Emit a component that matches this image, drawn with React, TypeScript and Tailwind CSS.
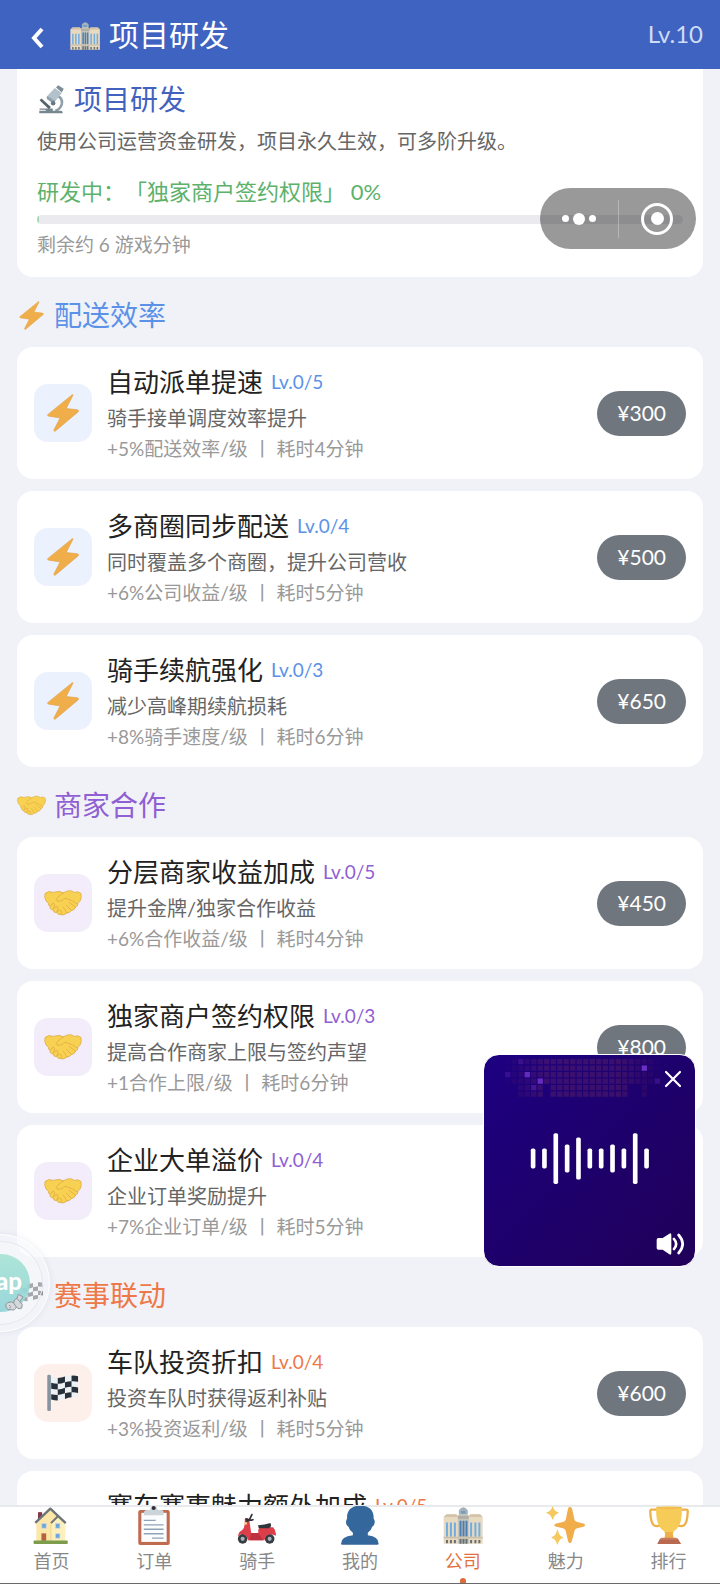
import type { ReactNode } from "react";

type IconProps = { className?: string };

const BoltIcon = ({ className }: IconProps) => (
  <svg viewBox="140 315 98 116" className={className} aria-hidden="true">
    <path
      d="M217 317 L142 378 Q141 382 146 383 L180 388 L161 425 Q161 430 166 428 L236 369 Q238 364 233 363 L199 359 L219 320 Q220 316 217 317Z"
      fill="#f0ae4a"
      stroke="#dd9a3c"
      strokeWidth="1.5"
    />
  </svg>
);

const HandshakeIcon = ({ className }: IconProps) => (
  <svg viewBox="134 366 111 78" className={className} aria-hidden="true">
    <path
      d="M137 377 Q148 368 160 374 L178 371 Q186 374 191 375 Q202 368 212 369 L224 374 Q234 369 242 377 Q245 390 239 400 L233 406 Q234 414 226 417 Q224 426 214 427 Q210 435 201 434 Q192 443 183 439 Q174 440 171 433 Q161 434 160 425 Q150 424 152 415 Q146 413 147 406 L140 399 Q134 389 137 377Z"
      fill="#f8d152"
      stroke="#d8a33a"
      strokeWidth="2"
    />
    <path
      d="M191 375 Q178 382 170 394 Q170 402 180 400 Q190 397 197 391 Q214 396 232 408 M207 403 L226 417 M199 411 L214 427 M190 417 L201 434 M152 414 Q157 405 163 406 Q168 409 160 424 M162 422 Q169 412 174 416 Q177 420 171 432 M173 431 Q179 422 184 427 Q186 431 183 438"
      fill="none"
      stroke="#dba640"
      strokeWidth="2"
      strokeLinecap="round"
    />
  </svg>
);

const FlagIcon = ({ className }: IconProps) => (
  <svg viewBox="140 525 100 116" className={className} aria-hidden="true">
    <rect x="142" y="527" width="11" height="111" rx="4" fill="#8595a0" />
    <path d="M154 532 Q176 542 196 533 Q216 525 236 532 L236 599 Q214 592 196 601 Q176 609 154 603Z" fill="#eef1f3" />
    <path
      d="M174 537 Q186 537 196 533 V550 Q186 555 174 555Z M216 530 Q226 529 236 532 V549 Q226 546 216 547Z M154 552 Q164 555 174 555 V572 Q164 572 154 570Z M196 550 Q206 547 216 547 V564 Q206 564 196 567Z M174 572 Q186 572 196 567 V584 Q186 588 174 589Z M216 564 Q226 563 236 566 V583 Q226 580 216 581Z M154 587 Q164 589 174 589 V606 Q164 606 154 603Z M196 584 Q206 581 216 581 V596 Q206 597 196 601Z"
      fill="#26303a"
    />
  </svg>
);

const MicroscopeIcon = ({ className }: IconProps) => (
  <svg viewBox="113 253 82 90" className={className} aria-hidden="true">
    <path d="M168 286 Q190 290 186 312 Q182 328 166 333" fill="none" stroke="#8f9fa9" strokeWidth="8" />
    <path d="M117 326 H158 V333 H184 Q189 334 189 341 H116 V333 H136 V330 H117Z" fill="#78878f" />
    <path d="M117 300 L123 295 L152 321 L146 328Z" fill="#56636b" />
    <path d="M164 262 L186 278 L166 303 Q160 310 152 305 L142 298 Q136 293 141 287Z" fill="#b3c2ca" />
    <path d="M141 287 L166 303 Q160 310 152 305 L142 298 Q136 293 141 287Z" fill="#90a2ad" />
    <path d="M168 261 L175 254 L192 265 L186 276Z" fill="#7d8e98" />
    <circle cx="159" cy="310" r="7" fill="#687982" />
  </svg>
);

const BuildingIcon = ({ className }: IconProps) => (
  <svg viewBox="247 141 121 112" className={className} aria-hidden="true">
    <path d="M249 171 L258 163 H287 L294 171 V252 H249Z M323 171 L330 163 H359 L367 171 V252 H323Z" fill="#e8d9c1" />
    <path d="M249 171 L258 163 H287 L294 171Z M323 171 L330 163 H359 L367 171Z" fill="#d3c3aa" />
    <path d="M292 168 L297 160 H320 L325 168 V252 H292Z" fill="#c3c4bf" />
    <path d="M295 162 V151 Q308 133 322 151 V162Z" fill="#a5b3b8" />
    <path d="M302 153 H315 V161 H302Z" fill="#6f9dc4" />
    <path d="M292 168 H325 V177 H292Z" fill="#b3aea3" />
    <path
      d="M256 188 h6 v43 h-6z M268 188 h6 v43 h-6z M280 188 h6 v43 h-6z M329 188 h6 v43 h-6z M342 188 h6 v43 h-6z M354 188 h6 v43 h-6z"
      fill="#70aee0"
    />
    <path d="M297 183 h6 v47 h-6z M306 183 h6 v47 h-6z M315 183 h6 v47 h-6z" fill="#4d7fae" />
    <path
      d="M256 241 h6 v10 h-6z M268 241 h6 v10 h-6z M280 241 h6 v10 h-6z M297 238 h6 v14 h-6z M306 238 h6 v14 h-6z M315 238 h6 v14 h-6z M329 241 h6 v10 h-6z M342 241 h6 v10 h-6z M354 241 h6 v10 h-6z"
      fill="#68706f"
    />
    <path d="M249 231 H367 V236 H249Z" fill="#cfc0a8" />
  </svg>
);

const HouseIcon = ({ className }: IconProps) => (
  <svg viewBox="97 138 116 114" className={className} aria-hidden="true">
    <path d="M117 156 h12 v22 h-12z" fill="#84384a" />
    <path d="M112 185 L153 147 L196 185 V241 H112Z" fill="#fbe8a9" />
    <path d="M155 190 L177 168 L197 190 V241 H155Z" fill="#fdf0bd" />
    <path d="M109 187 L153 146 L198 188" fill="none" stroke="#6f7478" strokeWidth="7" strokeLinejoin="round" />
    <path d="M155 188 L176 167" fill="none" stroke="#6f7478" strokeWidth="6" />
    <path d="M155 190 V240" stroke="#e5c98a" strokeWidth="2" />
    <path d="M128 189 h13 v14 h-13z M168 189 h13 v14 h-13z M168 219 h13 v13 h-13z" fill="#6ba5dc" stroke="#c9dbe6" strokeWidth="2" />
    <path d="M127 218 h14 v22 h-14z" fill="#b5623f" />
    <rect x="104" y="239" width="100" height="10" rx="3" fill="#7d9c4c" />
  </svg>
);

const ClipboardIcon = ({ className }: IconProps) => (
  <svg viewBox="404 138 116 114" className={className} aria-hidden="true">
    <rect x="416" y="150" width="92" height="102" rx="6" fill="#c06a50" />
    <path d="M425 158 H499 V243 H425Z" fill="#fbfcfd" />
    <path d="M433 165 V155 Q434 150 442 150 H450 Q452 138 461 138 Q471 138 473 150 H482 Q490 150 490 156 V165Z" fill="#ccd4d9" />
    <circle cx="461" cy="144" r="6" fill="#2b3036" />
    <path d="M432 180 H467 M432 193 H490 M432 206 H490 M432 219 H490 M456 232 H490" stroke="#8fa3b8" strokeWidth="4" />
  </svg>
);

const ScooterIcon = ({ className }: IconProps) => (
  <svg viewBox="714 142 116 114" className={className} aria-hidden="true">
    <circle cx="730" cy="238" r="14" fill="#363c42" />
    <circle cx="730" cy="238" r="6" fill="#aab4bb" />
    <circle cx="809" cy="238" r="14" fill="#363c42" />
    <circle cx="809" cy="238" r="6" fill="#aab4bb" />
    <path
      d="M736 181 Q742 174 749 180 L755 221 H776 Q774 206 782 204 H819 Q829 214 827 229 Q818 223 806 225 Q796 228 794 242 H746 Q742 226 730 224 Q722 224 717 231 Q716 219 729 212 Q738 205 736 181Z"
      fill="#dc3f4a"
    />
    <path d="M755 221 H776 L790 242 H750Z" fill="#c02f3d" />
    <path d="M775 198 Q795 198 811 192 Q817 204 806 207 Q790 208 777 206Z" fill="#30353b" />
    <path d="M741 186 L749 184 L757 167 M740 180 Q750 186 760 182" stroke="#2d3339" strokeWidth="5" fill="none" strokeLinecap="round" />
    <circle cx="739" cy="193" r="4" fill="#f2d27c" />
  </svg>
);

const PersonIcon = ({ className }: IconProps) => (
  <svg viewBox="-60 135 118 115" className={className} aria-hidden="true">
    <path
      d="M0 134 C28 134 41 150 39 172 Q44 177 42 186 Q40 194 35 196 Q32 207 22 214 V221 Q54 224 54 246 Q54 249 50 249 H-53 Q-57 249 -57 246 Q-57 224 -22 221 V214 Q-32 207 -35 196 Q-41 193 -42 186 Q-43 178 -39 172 C-41 150 -28 134 0 134Z"
      fill="#34679b"
    />
  </svg>
);

const SparklesIcon = ({ className }: IconProps) => (
  <svg viewBox="558 137 116 114" className={className} aria-hidden="true">
    <path d="M627 140 Q632 139 634 146 L641 178 Q643 183 649 184 L669 189 Q674 193 669 197 L649 202 Q643 203 641 209 L633 240 Q627 252 622 240 L615 209 Q613 203 607 202 L585 197 Q579 193 585 189 L607 184 Q613 183 615 178 L622 144 Q624 140 627 140Z" fill="#f0ad49" />
    <path d="M577 140 Q580 153 593 157 Q581 161 577 175 Q573 161 560 157 Q573 153 577 140Z M591 208 Q594 225 606 229 Q594 233 591 248 Q588 233 575 229 Q588 225 591 208Z" fill="#f5c95e" stroke="#f5c95e" strokeWidth="3" strokeLinejoin="round" />
  </svg>
);

const TrophyIcon = ({ className }: IconProps) => (
  <svg viewBox="865 134 122 119" className={className} aria-hidden="true">
    <path d="M893 145 H873 Q868 145 869 153 Q870 190 884 195 Q890 196 900 194 M958 145 H979 Q984 145 983 153 Q982 190 968 195 Q962 196 952 194" fill="none" stroke="#eeb048" strokeWidth="7" />
    <path d="M887 137 Q926 132 965 137 Q968 196 941 210 L937 222 H915 L911 210 Q884 196 887 137Z" fill="#f6cb57" />
    <path d="M915 213 H937 L940 233 H912Z" fill="#eeb048" />
    <path d="M899 233 H953 L963 250 H890Z" fill="#b8694f" />
    <path d="M903 231 H949 V237 H901Z" fill="#cd7b5c" />
    <path d="M889 138 Q926 145 963 138" fill="none" stroke="#eeb850" strokeWidth="4" />
  </svg>
);

type Project = { name: string; level: string; desc: string; meta: string; price: string };
type Section = {
  title: string;
  Icon: (p: IconProps) => ReactNode;
  text: string;
  tile: string;
  projects: Project[];
};

const sections: Section[] = [
  {
    title: "配送效率",
    Icon: BoltIcon,
    text: "text-[#5b92e8]",
    tile: "bg-[#ebf1fd]",
    projects: [
      { name: "自动派单提速", level: "Lv.0/5", desc: "骑手接单调度效率提升", meta: "+5%配送效率/级 丨 耗时4分钟", price: "¥300" },
      { name: "多商圈同步配送", level: "Lv.0/4", desc: "同时覆盖多个商圈，提升公司营收", meta: "+6%公司收益/级 丨 耗时5分钟", price: "¥500" },
      { name: "骑手续航强化", level: "Lv.0/3", desc: "减少高峰期续航损耗", meta: "+8%骑手速度/级 丨 耗时6分钟", price: "¥650" },
    ],
  },
  {
    title: "商家合作",
    Icon: HandshakeIcon,
    text: "text-[#8f5fd3]",
    tile: "bg-[#f3edfb]",
    projects: [
      { name: "分层商家收益加成", level: "Lv.0/5", desc: "提升金牌/独家合作收益", meta: "+6%合作收益/级 丨 耗时4分钟", price: "¥450" },
      { name: "独家商户签约权限", level: "Lv.0/3", desc: "提高合作商家上限与签约声望", meta: "+1合作上限/级 丨 耗时6分钟", price: "¥800" },
      { name: "企业大单溢价", level: "Lv.0/4", desc: "企业订单奖励提升", meta: "+7%企业订单/级 丨 耗时5分钟", price: "" },
    ],
  },
  {
    title: "赛事联动",
    Icon: FlagIcon,
    text: "text-[#ee7847]",
    tile: "bg-[#fdf0ea]",
    projects: [
      { name: "车队投资折扣", level: "Lv.0/4", desc: "投资车队时获得返利补贴", meta: "+3%投资返利/级 丨 耗时5分钟", price: "¥600" },
      { name: "赛车赛事魅力额外加成", level: "Lv.0/5", desc: "", meta: "", price: "" },
    ],
  },
];

const tabs = [
  { label: "首页", Icon: HouseIcon },
  { label: "订单", Icon: ClipboardIcon },
  { label: "骑手", Icon: ScooterIcon },
  { label: "我的", Icon: PersonIcon },
  { label: "公司", Icon: BuildingIcon, active: true },
  { label: "魅力", Icon: SparklesIcon },
  { label: "排行", Icon: TrophyIcon },
];

function ProjectCard({ project, section }: { project: Project; section: Section }) {
  const { Icon } = section;
  return (
    <li className="flex items-center gap-[15px] rounded-2xl bg-white px-[17px] py-4">
      <div className={`flex size-[58px] shrink-0 items-center justify-center rounded-[14px] ${section.tile}`}>
        <Icon className="size-[38px]" />
      </div>
      <div className="min-w-0 flex-1">
        <h3 className="flex items-center gap-2 text-[26px] leading-[38px] text-[#222]">
          {project.name}
          <span className={`text-[19px] ${section.text}`}>{project.level}</span>
        </h3>
        <p className="min-h-[34px] text-xl leading-[34px] text-[#666]">{project.desc}</p>
        <p className="min-h-7 text-[19px] leading-7 text-[#999]">{project.meta}</p>
      </div>
      {project.price && (
        <button type="button" className="h-[45px] rounded-full bg-[#70767e] px-5 text-[21px] text-white">
          {project.price}
        </button>
      )}
    </li>
  );
}

function Capsule() {
  return (
    <div className="absolute top-[188px] right-6 flex h-[61px] w-[156px] items-center rounded-full bg-black/40">
      <button type="button" aria-label="更多" className="flex flex-1 items-center justify-center gap-1">
        <span className="size-[7px] rounded-full bg-white" />
        <span className="size-3 rounded-full bg-white" />
        <span className="size-[7px] rounded-full bg-white" />
      </button>
      <span className="h-[38px] w-px bg-white/30" />
      <button type="button" aria-label="关闭" className="flex flex-1 items-center justify-center">
        <span className="flex size-8 items-center justify-center rounded-full border-[3px] border-white">
          <span className="size-[13px] rounded-full bg-white" />
        </span>
      </button>
    </div>
  );
}

const bars = [60, 60, 153, 84, 127, 60, 60, 84, 60, 153, 60];
const litCells = [
  [3, 0, 0.25],
  [1, 2, 0.3],
  [4, 2, 0.9],
  [6, 3, 0.9],
  [5, 4, 0.35],
  [22, 1, 1],
  [24, 3, 0.3],
];

function AudioWindow() {
  return (
    <section
      aria-label="音频"
      className="absolute right-6 bottom-[317px] size-[213px] overflow-hidden rounded-2xl border border-white bg-linear-to-br from-[#1d0082] via-[#1e006c] to-[#200058]"
    >
      <svg viewBox="0 0 636 636" className="size-full" aria-hidden="true">
        {Array.from({ length: 26 * 6 }, (_, i) => {
          const col = i % 26;
          const row = Math.floor(i / 26);
          const edge = Math.min(col, 25 - col);
          if (row > 3 && (col === 7 || edge < 3 || col === 20 || col === 21)) return null;
          return (
            <rect
              key={i}
              x={44 + col * 19.6}
              y={12 + row * 19.6}
              width="16"
              height="16"
              fill="#8a3a5c"
              opacity={Math.min(0.28, edge * 0.04)}
            />
          );
        })}
        {litCells.map(([col, row, o]) => (
          <rect key={`${col}-${row}`} x={44 + col * 19.6} y={12 + row * 19.6} width="16" height="16" fill="#6a2fc4" opacity={o} />
        ))}
        {bars.map((h, i) => (
          <rect key={i} x={141 + i * 34.2} y={312 - h / 2} width="14" height={h} rx="5" fill="#fff" />
        ))}
      </svg>
      <button type="button" aria-label="关闭音频" className="absolute top-3 right-[10px] flex size-6 items-center justify-center">
        <svg viewBox="0 0 24 24" className="size-6" fill="none" stroke="#fff" strokeWidth="2.2" strokeLinecap="round">
          <path d="M5 5 L19 19 M19 5 L5 19" />
        </svg>
      </button>
      <button type="button" aria-label="音量" className="absolute right-2 bottom-2 flex h-7 w-8 items-center justify-center">
        <svg viewBox="520 530 90 72" className="h-6 w-[30px]">
          <path d="M527 548 H540 L560 535 Q566 532 566 539 V593 Q566 600 560 597 L540 583 H527 Q522 583 522 578 V553 Q522 548 527 548Z" fill="#fff" />
          <path d="M574 551 Q587 566 574 581 M588 539 Q612 566 588 593" fill="none" stroke="#fff" strokeWidth="8" strokeLinecap="round" />
        </svg>
      </button>
    </section>
  );
}

function TapBubble() {
  return (
    <button
      type="button"
      className="absolute bottom-[252px] -left-12 flex size-[98px] items-center justify-center rounded-full border border-white bg-[#f4f5fa]/50 shadow-[0_0_6px_rgba(120,130,160,0.15)]"
    >
      <span className="flex size-[84px] items-center justify-center rounded-full border border-[#e6e8ef] bg-white/20">
        <span className="flex size-[58px] items-center justify-end rounded-full bg-linear-to-b from-[#a5e3d3]/90 to-[#8fd3d8]/90 pr-2 pb-1 font-[Lato,sans-serif] text-2xl font-black text-white">
          ap
        </span>
      </span>
      <svg viewBox="0 0 60 54" className="absolute right-6 bottom-5 h-[18px] w-5" aria-hidden="true">
        <path
          d="M40 4 L54 12 L44 26 Q56 34 50 44 Q42 52 34 42 Q30 54 18 50 Q8 54 3 42 Q0 30 12 28 Q20 24 26 30 Q26 18 36 16Z"
          fill="#d5d9dc"
          stroke="#8f9599"
          strokeWidth="3"
        />
        <path d="M12 36 Q20 40 14 46 M26 30 L34 42 M36 16 L44 26" fill="none" stroke="#8f9599" strokeWidth="3" />
      </svg>
    </button>
  );
}

export default function App() {
  return (
    <div className="relative flex h-screen flex-col overflow-hidden bg-[#f1f2f8] font-['Lato','Noto_Sans_CJK_SC',sans-serif] [text-spacing-trim:space-all]">
      <header className="flex h-[69px] shrink-0 items-center bg-[#3f63c1] pr-[17px] pb-[2px] pl-7 text-white">
        <button type="button" aria-label="返回" className="flex w-[41px] items-center pt-2">
          <svg viewBox="0 0 20 24" className="h-6 w-5" fill="none" stroke="#fff" strokeWidth="4">
            <path d="M14 3 L6 12 L14 21" />
          </svg>
        </button>
        <BuildingIcon className="mt-1 h-7 w-8" />
        <h1 className="ml-2 flex-1 text-[30px] leading-10">项目研发</h1>
        <span className="text-2xl text-[#cfdcf6]">Lv.10</span>
      </header>

      <main className="min-h-0 flex-1 overflow-y-auto px-[17px] [scrollbar-width:none]">
        <section className="rounded-b-2xl bg-white px-5 pt-[10px] pb-[18px]">
          <h2 className="flex items-center gap-2 text-[28px] leading-10 text-[#4262bf]">
            <MicroscopeIcon className="size-[29px]" />
            项目研发
          </h2>
          <p className="mt-[6px] text-xl leading-8 text-[#666]">使用公司运营资金研发，项目永久生效，可多阶升级。</p>
          <p className="mt-[19px] text-[22px] leading-8 text-[#5cb16b]">研发中：「独家商户签约权限」 0%</p>
          <div role="progressbar" aria-label="研发进度" aria-valuenow={0} className="mt-[7px] h-[9px] overflow-hidden rounded-full bg-[#ebebef]">
            <div className="h-full w-[2px] bg-[#a9d6b1]" />
          </div>
          <p className="mt-[7px] text-[19px] leading-7 text-[#999]">剩余约 6 游戏分钟</p>
        </section>

        {sections.map((section) => (
          <section key={section.title}>
            <h2 className={`flex items-center gap-2 pt-[18px] pb-3 text-[28px] leading-10 ${section.text}`}>
              <section.Icon className="size-[29px]" />
              {section.title}
            </h2>
            <ul className="flex flex-col gap-3">
              {section.projects.map((project) => (
                <ProjectCard key={project.name} project={project} section={section} />
              ))}
            </ul>
          </section>
        ))}
      </main>

      <nav className="flex h-[79px] shrink-0 border-t-2 border-b border-t-[#e9eaee] border-b-[#6a6a6a] bg-white">
        {tabs.map(({ label, Icon, active }) => (
          <a
            key={label}
            href="#"
            className={`relative flex flex-1 flex-col items-center text-lg leading-7 ${active ? "text-[#e2713f]" : "text-[#888]"}`}
          >
            <Icon className="-mt-px h-[39px] w-10" />
            <span className="mt-[2px]">{label}</span>
            {active && <span className="absolute bottom-0 h-[5px] w-[6px] rounded-t-full bg-[#dd6b3c]" />}
          </a>
        ))}
      </nav>

      <Capsule />
      <AudioWindow />
      <TapBubble />
    </div>
  );
}
